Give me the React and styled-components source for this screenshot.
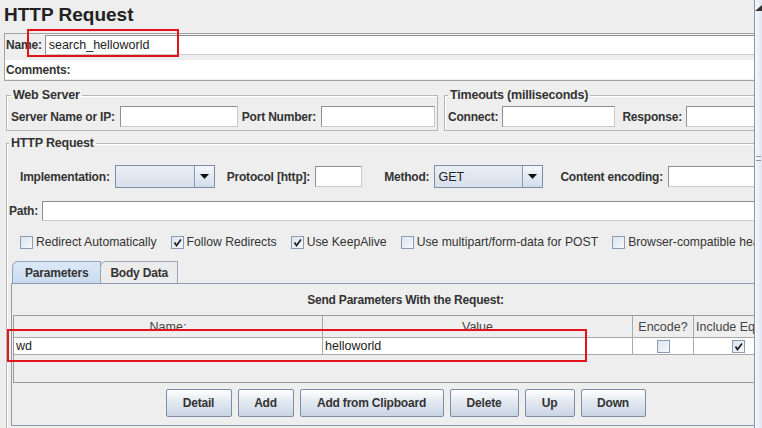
import React from "react";
import styled, { createGlobalStyle } from "styled-components";

const GlobalStyle = createGlobalStyle`
  html, body {
    margin: 0;
    padding: 0;
    background: #eeeeee;
    overflow: hidden;
  }
  body {
    font-family: "Liberation Sans", Arial, sans-serif;
    font-size: 12px;
    color: #333333;
  }
`;

const Root = styled.div`
  position: relative;
  display: flex;
  width: 762px;
  height: 428px;
  overflow: hidden;
  background: #eeeeee;
`;

const Main = styled.div`
  width: 754px;
  height: 428px;
  overflow: hidden;
  flex-shrink: 0;
`;

const Inner = styled.div`
  width: 801px;
`;

const Divider = styled.div`
  position: relative;
  width: 8px;
  border-left: 1px solid #8696ae;
  background: linear-gradient(90deg, #f6f9fd, #dfe7f2);
  display: flex;
  flex-direction: column;
  align-items: center;
`;

const Corner = styled.div`
  position: absolute;
  top: 0;
  left: 0;
`;

const Grip = styled.div`
  margin-top: 156px;
  width: 5px;
  height: 5px;
  border-top: 1px solid #8a9ab2;
  border-bottom: 1px solid #8a9ab2;
  box-sizing: border-box;
`;

const Title = styled.div`
  height: 33px;
  line-height: 30px;
  padding-left: 4px;
  font-size: 19px;
  font-weight: bold;
  color: #222;
`;

const NameBox = styled.div`
  margin-left: 4px;
  border: 1px solid #a3a3a3;
  height: 48px;
  box-sizing: border-box;
  padding-top: 1px;
`;

const Row = styled.div`
  display: flex;
  align-items: center;
  gap: ${(p) => p.$gap ?? 4}px;
  margin-left: ${(p) => p.$ml ?? 0}px;
  margin-top: ${(p) => p.$mt ?? 0}px;
`;

const CommentsRow = styled.div`
  display: flex;
  align-items: center;
  height: 19px;
  margin-top: 5px;
  background: #ffffff;
  padding-left: 1px;
`;

const Label = styled.span`
  font-weight: bold;
  white-space: nowrap;
  color: #333;
  letter-spacing: -0.2px;
  margin-left: ${(p) => p.$ml ?? 0}px;
`;

const Field = styled.div`
  box-sizing: border-box;
  height: ${(p) => p.$h ?? 21}px;
  width: ${(p) => (p.$w ? p.$w + "px" : "auto")};
  flex: ${(p) => (p.$w ? "none" : 1)};
  background: #ffffff;
  border: 1px solid #8d8f92;
  border-right-color: #c9c9c9;
  border-bottom-color: #c9c9c9;
  padding-left: 3px;
  display: flex;
  align-items: center;
  white-space: nowrap;
  font-size: 12.5px;
  color: #222;
`;

const FieldsetRow = styled.div`
  display: flex;
  gap: 6px;
  margin: 7px 0 0 6px;
`;

const Group = styled.fieldset`
  margin: 0;
  box-sizing: border-box;
  width: ${(p) => (p.$w ? p.$w + "px" : "auto")};
  flex: ${(p) => (p.$w ? "none" : 1)};
  border: 1px solid #b7b7b7;
  box-shadow: inset 1px 1px 0 #ffffff;
  padding: 4px 1px 3px ${(p) => p.$pl ?? 4}px;
  min-width: 0;
`;

const Legend = styled.legend`
  padding: 0 2px;
  font-size: 12.5px;
  line-height: 14px;
  color: #333;
  font-weight: bold;
  letter-spacing: -0.2px;
`;

const HttpGroup = styled(Group)`
  margin: 5px 0 0 6px;
  padding: 15px 0 0 2px;
  height: 320px;
`;

const Combo = styled.div`
  box-sizing: border-box;
  width: ${(p) => p.$w}px;
  height: 23px;
  display: flex;
  border: 1px solid #7d8ea6;
  background: linear-gradient(#e9eef5, #d6dfea);
`;

const ComboValue = styled.div`
  flex: 1;
  padding-left: 3px;
  display: flex;
  align-items: center;
  font-size: 12.5px;
  color: #222;
`;

const ComboArrow = styled.div`
  width: 19px;
  border-left: 1px solid #8a9bb2;
  background: linear-gradient(#f4f7fb, #d2ddeb);
  display: flex;
  align-items: center;
  justify-content: center;
`;

const Check = styled.span`
  box-sizing: border-box;
  width: 13px;
  height: 13px;
  border: 1px solid #8b9cb4;
  background: linear-gradient(135deg, #dbe4ef, #f7f9fc);
  display: inline-flex;
  align-items: center;
  justify-content: center;
  flex: none;
`;

const CheckItem = styled.span`
  display: inline-flex;
  align-items: center;
  gap: 3px;
  white-space: nowrap;
  font-size: 12.2px;
  color: #333;
`;

const Tabs = styled.div`
  display: flex;
  margin: 12px 0 0 3px;
  height: 22px;
`;

const Tab = styled.div`
  box-sizing: border-box;
  height: 22px;
  padding: 0 ${(p) => (p.$active ? 12 : 9)}px;
  display: flex;
  align-items: center;
  font-weight: bold;
  letter-spacing: -0.2px;
  color: #333;
  border: 1px solid ${(p) => (p.$active ? "#8fa3bd" : "#9aa6b6")};
  border-bottom: none;
  border-top-left-radius: 6px;
  background: ${(p) =>
    p.$active ? "linear-gradient(#dce8f6, #c9dbef)" : "#ececec"};
  margin-left: ${(p) => (p.$active ? 0 : -1)}px;
`;

const TabPanel = styled.div`
  margin-left: 2px;
  border: 1px solid #8b9bb1;
  padding: 0 1px 6px 1px;
  box-sizing: border-box;
  height: 143px;
`;

const PanelTitle = styled.div`
  height: 31px;
  line-height: 32px;
  text-align: center;
  font-weight: bold;
  letter-spacing: -0.2px;
  color: #333;
`;

const TableBox = styled.div`
  border: 1px solid #9c9c9c;
  border-right: none;
  height: 68px;
  box-sizing: border-box;
`;

const TableRow = styled.div`
  display: grid;
  grid-template-columns: 309px 310px 61px 1fr;
  height: ${(p) => p.$h}px;
  background: ${(p) => (p.$header ? "#eeeeee" : "#ffffff")};
  border-bottom: 1px solid #a9a9a9;
  box-sizing: border-box;
`;

const Cell = styled.div`
  border-right: 1px solid #a9a9a9;
  display: flex;
  align-items: center;
  justify-content: ${(p) => p.$align ?? "flex-start"};
  padding: 0 2px;
  white-space: nowrap;
  overflow: hidden;
  font-size: 12.5px;
  color: ${(p) => (p.$header ? "#444" : "#222")};
`;

const ButtonRow = styled.div`
  display: flex;
  justify-content: center;
  gap: 6px;
  margin-top: 6px;
`;

const Button = styled.div`
  box-sizing: border-box;
  width: ${(p) => p.$w}px;
  height: 28px;
  display: flex;
  align-items: center;
  justify-content: center;
  font-weight: bold;
  letter-spacing: -0.2px;
  color: #333;
  border: 1px solid #7c8da5;
  border-radius: 2px;
  background: linear-gradient(#ffffff, #e3e9f1 45%, #c9d5e4);
`;

const Marker = styled.div`
  position: absolute;
  border: 2px solid #e3131b;
  pointer-events: none;
`;

const Arrow = () => (
  <svg width="9" height="5" viewBox="0 0 9 5">
    <path d="M0 0 L9 0 L4.5 5 Z" fill="#111" />
  </svg>
);

const Tick = () => (
  <svg width="9" height="9" viewBox="0 0 9 9">
    <path d="M1.5 4.5 L3.5 7.5 L8 1.5" stroke="#1d1d1d" strokeWidth="1.7" fill="none" />
  </svg>
);

const CheckBox = ({ checked, label }) => (
  <CheckItem>
    <Check>{checked && <Tick />}</Check>
    {label}
  </CheckItem>
);

const options = [
  { label: "Redirect Automatically", checked: false },
  { label: "Follow Redirects", checked: true },
  { label: "Use KeepAlive", checked: true },
  { label: "Use multipart/form-data for POST", checked: false },
  { label: "Browser-compatible headers", checked: false },
];

const buttons = [
  ["Detail", 66],
  ["Add", 56],
  ["Add from Clipboard", 144],
  ["Delete", 69],
  ["Up", 50],
  ["Down", 65],
];

export default function App() {
  return (
    <>
      <GlobalStyle />
      <Root>
        <Main>
          <Inner>
            <Title>HTTP Request</Title>
            <NameBox>
              <Row $ml={1} $gap={3}>
                <Label>Name:</Label>
                <Field $h={20}>search_helloworld</Field>
              </Row>
              <CommentsRow>
                <Label>Comments:</Label>
              </CommentsRow>
            </NameBox>

            <FieldsetRow>
              <Group $w={432}>
                <Legend>Web Server</Legend>
                <Row $gap={5}>
                  <Label>Server Name or IP:</Label>
                  <Field $w={118} />
                  <Label $ml={-1}>Port Number:</Label>
                  <Field $w={114} />
                </Row>
              </Group>
              <Group $pl={3}>
                <Legend>Timeouts (milliseconds)</Legend>
                <Row>
                  <Label>Connect:</Label>
                  <Field $w={113} />
                  <Label $ml={3}>Response:</Label>
                  <Field />
                </Row>
              </Group>
            </FieldsetRow>

            <HttpGroup>
              <Legend>HTTP Request</Legend>
              <Row $ml={11} $gap={5}>
                <Label>Implementation:</Label>
                <Combo $w={100}>
                  <ComboValue />
                  <ComboArrow>
                    <Arrow />
                  </ComboArrow>
                </Combo>
                <Label $ml={7}>Protocol [http]:</Label>
                <Field $w={47} />
                <Label $ml={17}>Method:</Label>
                <Combo $w={109}>
                  <ComboValue>GET</ComboValue>
                  <ComboArrow>
                    <Arrow />
                  </ComboArrow>
                </Combo>
                <Label $ml={12}>Content encoding:</Label>
                <Field />
              </Row>
              <Row $mt={13} $gap={4}>
                <Label>Path:</Label>
                <Field $h={20} />
              </Row>
              <Row $mt={14} $ml={11} $gap={14}>
                {options.map((o) => (
                  <CheckBox key={o.label} {...o} />
                ))}
              </Row>
              <Tabs>
                <Tab $active>Parameters</Tab>
                <Tab>Body Data</Tab>
              </Tabs>
              <TabPanel>
                <PanelTitle>Send Parameters With the Request:</PanelTitle>
                <TableBox>
                  <TableRow $header $h={22}>
                    <Cell $header $align="center">Name:</Cell>
                    <Cell $header $align="center">Value</Cell>
                    <Cell $header $align="center">Encode?</Cell>
                    <Cell $header>Include Equals?</Cell>
                  </TableRow>
                  <TableRow $h={17}>
                    <Cell>wd</Cell>
                    <Cell>helloworld</Cell>
                    <Cell $align="center">
                      <Check />
                    </Cell>
                    <Cell style={{ paddingLeft: 38 }}>
                      <Check>
                        <Tick />
                      </Check>
                    </Cell>
                  </TableRow>
                </TableBox>
                <ButtonRow>
                  {buttons.map(([t, w]) => (
                    <Button key={t} $w={w}>
                      {t}
                    </Button>
                  ))}
                </ButtonRow>
              </TabPanel>
            </HttpGroup>
          </Inner>
        </Main>
        <Divider>
          <Corner>
            <svg width="7" height="6" viewBox="0 0 7 6">
              <path d="M0 6 L7 0 L7 6 Z" fill="#333" />
            </svg>
          </Corner>
          <Grip />
        </Divider>
        <Marker style={{ left: 27, top: 29, width: 148, height: 24 }} />
        <Marker style={{ left: 7, top: 329, width: 576, height: 29 }} />
      </Root>
    </>
  );
}
